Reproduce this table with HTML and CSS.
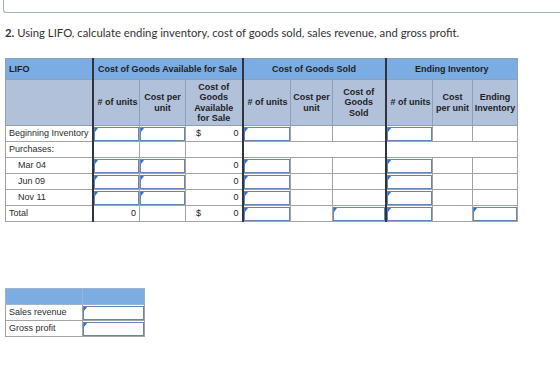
FILE: index.html
```html
<!DOCTYPE html>
<html>
<head>
<meta charset="utf-8">
<link rel="stylesheet" href="styles.css">
</head>
<body>
<div class="topbox"></div>
<div class="page">
  <p class="q"><b>2.</b> Using LIFO, calculate ending inventory, cost of goods sold, sales revenue, and gross profit.</p>

  <table class="grid">
    <colgroup>
      <col style="width:87px"><col style="width:47px"><col style="width:46px"><col style="width:57px">
      <col style="width:48px"><col style="width:42px"><col style="width:53px">
      <col style="width:47px"><col style="width:40px"><col style="width:45px">
    </colgroup>
    <tr class="h1">
      <th class="lbl">LIFO</th>
      <th colspan="3" class="grp">Cost of Goods Available for Sale</th>
      <th colspan="3" class="grp">Cost of Goods Sold</th>
      <th colspan="3" class="grp">Ending Inventory</th>
    </tr>
    <tr class="h2">
      <th></th>
      <th class="grp">#&nbsp;of&nbsp;units</th>
      <th>Cost per unit</th>
      <th>Cost of Goods Available for Sale</th>
      <th class="grp">#&nbsp;of&nbsp;units</th>
      <th class="tight">Cost per unit</th>
      <th>Cost of Goods Sold</th>
      <th class="grp">#&nbsp;of&nbsp;units</th>
      <th class="tight">Cost per&nbsp;unit</th>
      <th class="tight">Ending Inventory</th>
    </tr>
    <tr>
      <td class="name">Beginning Inventory</td>
      <td class="in grp"><div class="box"></div></td>
      <td class="in"><div class="box"></div></td>
      <td><div class="money"><span>$</span><span>0</span></div></td>
      <td class="in grp"><div class="box"></div></td>
      <td></td>
      <td></td>
      <td class="in grp"><div class="box"></div></td>
      <td></td>
      <td></td>
    </tr>
    <tr>
      <td class="name">Purchases:</td>
      <td class="grp"></td>
      <td></td>
      <td></td>
      <td colspan="3" class="grp"></td>
      <td colspan="3" class="grp"></td>
    </tr>
    <tr>
      <td class="name sub">Mar 04</td>
      <td class="in grp"><div class="box"></div></td>
      <td class="in"><div class="box"></div></td>
      <td class="num">0</td>
      <td class="in grp"><div class="box"></div></td>
      <td></td>
      <td></td>
      <td class="in grp"><div class="box"></div></td>
      <td></td>
      <td></td>
    </tr>
    <tr>
      <td class="name sub">Jun 09</td>
      <td class="in grp"><div class="box"></div></td>
      <td class="in"><div class="box"></div></td>
      <td class="num">0</td>
      <td class="in grp"><div class="box"></div></td>
      <td></td>
      <td></td>
      <td class="in grp"><div class="box"></div></td>
      <td></td>
      <td></td>
    </tr>
    <tr>
      <td class="name sub">Nov 11</td>
      <td class="in grp"><div class="box"></div></td>
      <td class="in"><div class="box"></div></td>
      <td class="num">0</td>
      <td class="in grp"><div class="box"></div></td>
      <td></td>
      <td></td>
      <td class="in grp"><div class="box"></div></td>
      <td></td>
      <td></td>
    </tr>
    <tr>
      <td class="name">Total</td>
      <td class="num grp">0</td>
      <td></td>
      <td><div class="money"><span>$</span><span>0</span></div></td>
      <td class="in grp"><div class="box"></div></td>
      <td></td>
      <td class="in"><div class="box"></div></td>
      <td class="in grp"><div class="box"></div></td>
      <td></td>
      <td class="in"><div class="box"></div></td>
    </tr>
  </table>

  <table class="grid small">
    <colgroup><col style="width:77px"><col style="width:62px"></colgroup>
    <tr class="hs"><th></th><th></th></tr>
    <tr>
      <td class="name">Sales revenue</td>
      <td class="in"><div class="box"></div></td>
    </tr>
    <tr>
      <td class="name">Gross profit</td>
      <td class="in"><div class="box"></div></td>
    </tr>
  </table>
</div>
</body>
</html>
```

FILE: styles.css
```css
html, body {
  margin: 0;
  padding: 0;
  background: #fff;
}

.topbox {
  height: 12px;
  margin-left: 3px;
  border-left: 1px solid #9fb3cc;
  border-bottom: 1px solid #9fb3cc;
  border-bottom-left-radius: 3px;
}

.page {
  padding: 0 5px;
}

.q {
  margin: 13px 0 18px 0;
  font-family: Lato, "Open Sans", sans-serif;
  font-size: 11.3px;
  line-height: 14px;
  color: #333;
}

.q b {
  font-weight: 700;
}

.grid {
  border-collapse: collapse;
  table-layout: fixed;
  width: 512px;
  font-family: "Liberation Sans", Arial, sans-serif;
  font-size: 9px;
  color: #222;
  border: 1px solid #9a9a9a;
}

.grid th,
.grid td {
  border: 1px solid #a3a3a3;
  padding: 0;
  overflow: hidden;
}

.grid th {
  font-weight: 700;
  text-align: center;
  line-height: 10.4px;
  color: #1e1e1e;
}

.h1 th {
  background: #7badE2;
  height: 20px;
  border-color: #8e9fb8;
}

.h1 th.lbl {
  text-align: left;
  padding-left: 3px;
}

.h2 th {
  background: #b1c1da;
  height: 45px;
  border-color: #8e9fb8;
  padding: 0 4px;
}

.h2 th.tight {
  padding: 0;
}

.grid .grp {
  border-left: 2px solid #2e3540;
}

.grid td {
  height: 15px;
  line-height: 15px;
}

.grid td.name {
  padding-left: 3px;
  color: #2b2b2b;
  white-space: nowrap;
}

.grid td.sub {
  padding-left: 12px;
}

.grid td.num {
  text-align: right;
  padding-right: 3px;
}

.money {
  display: flex;
  justify-content: space-between;
  padding: 0 3px 0 10px;
}

.grid td.in {
  padding: 0;
}

.box {
  position: relative;
  height: 12px;
  border: 1.5px solid #6585b3;
}

.box::before {
  content: "";
  position: absolute;
  left: 0;
  top: 0;
  border-top: 4px solid #2f6fd0;
  border-right: 3px solid transparent;
}

.small {
  width: 139px;
  margin-top: 66px;
}

.hs th {
  background: #7badE2;
  height: 15px;
  border-color: #9fb3cc;
}
```
